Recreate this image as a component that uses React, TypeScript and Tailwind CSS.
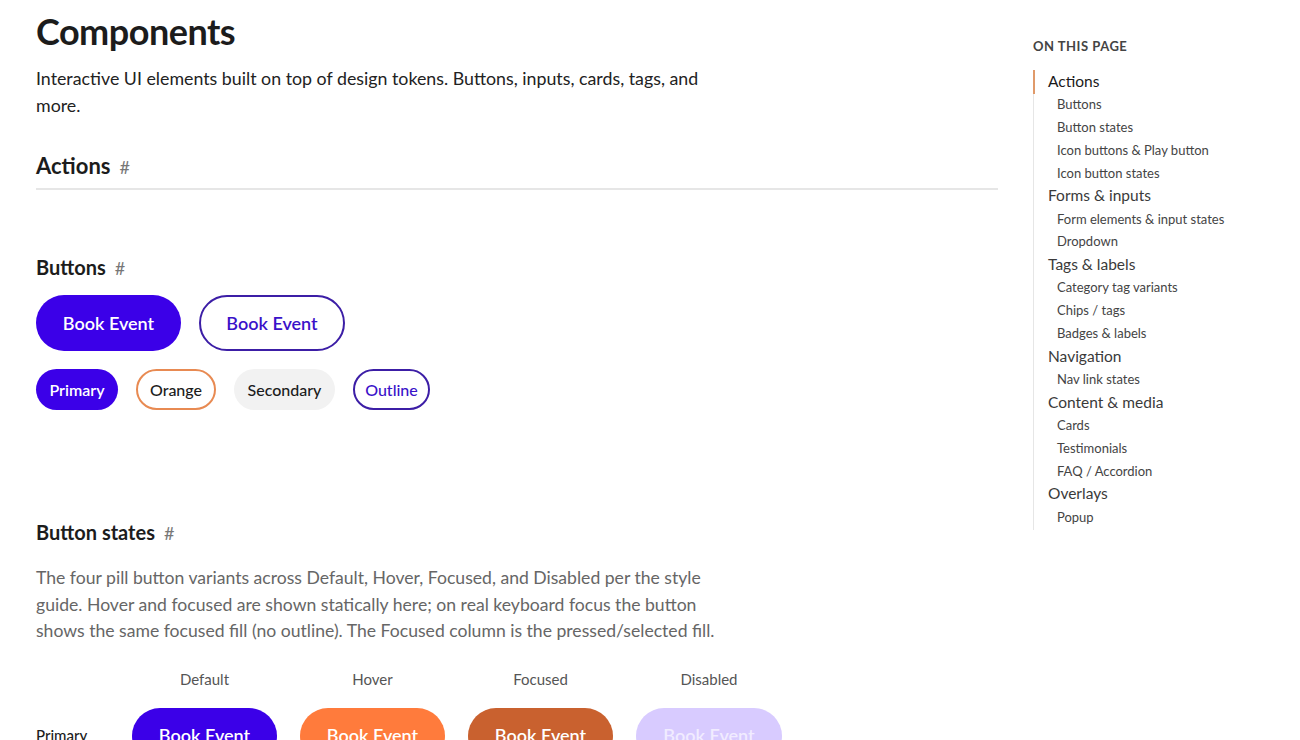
import React from "react";

const font = { fontFamily: "Lato, 'Noto Sans', sans-serif" };

function Hash() {
  return <span className="ml-[9px] text-[18px] font-normal text-[#777]">#</span>;
}

const toc: [string, boolean][] = [
  ["Actions", true],
  ["Buttons", false],
  ["Button states", false],
  ["Icon buttons & Play button", false],
  ["Icon button states", false],
  ["Forms & inputs", true],
  ["Form elements & input states", false],
  ["Dropdown", false],
  ["Tags & labels", true],
  ["Category tag variants", false],
  ["Chips / tags", false],
  ["Badges & labels", false],
  ["Navigation", true],
  ["Nav link states", false],
  ["Content & media", true],
  ["Cards", false],
  ["Testimonials", false],
  ["FAQ / Accordion", false],
  ["Overlays", true],
  ["Popup", false],
];

export default function App() {
  return (
    <div className="flex h-[740px] overflow-hidden bg-white text-[#1a1a1a]" style={font}>
      <main className="w-[998px] shrink-0 pl-[36px]">
        <h1 className="mt-[9px] text-[36px] font-bold leading-[44px] tracking-[-0.5px] text-[#1c1c1c]">Components</h1>
        <p className="mt-[12px] w-[680px] text-[17.8px] leading-[27px] text-[#222]">
          Interactive UI elements built on top of design tokens. Buttons, inputs, cards, tags, and more.
        </p>
        <div className="mt-[32px] border-b-2 border-[#e6e6e6] pb-[6px]">
          <h2 className="text-[22px] font-bold leading-[30px] text-[#1c1c1c]">
            Actions
            <Hash />
          </h2>
        </div>

        <h3 className="mt-[63px] text-[20px] font-bold leading-[28px] text-[#1c1c1c]">
          Buttons
          <Hash />
        </h3>
        <div className="mt-[13px] flex gap-[18px]">
          <button className="flex h-[56px] w-[145px] items-center justify-center rounded-full bg-[#3b00e8] text-[18px] font-semibold text-white">
            Book Event
          </button>
          <button className="flex h-[56px] w-[146px] items-center justify-center rounded-full border-2 border-[#3c1ea6] bg-white text-[18px] font-semibold text-[#3a12c9]">
            Book Event
          </button>
        </div>
        <div className="mt-[18px] flex gap-[18px]">
          <button className="flex h-[41px] w-[82px] items-center justify-center rounded-full bg-[#3b00e8] text-[16px] font-semibold text-white">
            Primary
          </button>
          <button className="flex h-[41px] w-[80px] items-center justify-center rounded-full border-2 border-[#e88a52] bg-white text-[16px] font-medium text-[#1c1c1c]">
            Orange
          </button>
          <button className="flex h-[41px] w-[101px] items-center justify-center rounded-full bg-[#f2f2f2] text-[16px] font-medium text-[#1c1c1c]">
            Secondary
          </button>
          <button className="flex h-[41px] w-[77px] items-center justify-center rounded-full border-2 border-[#3c1ea6] bg-white text-[16px] font-medium text-[#3a12c9]">
            Outline
          </button>
        </div>

        <h3 className="mt-[108px] text-[20px] font-bold leading-[28px] text-[#1c1c1c]">
          Button states
          <Hash />
        </h3>
        <p className="mt-[18px] w-[690px] text-[17.6px] leading-[26.5px] text-[#666]">
          The four pill button variants across Default, Hover, Focused, and Disabled per the style guide. Hover and focused are shown statically here; on real keyboard focus the button shows the same focused fill (no outline). The Focused column is the pressed/selected fill.
        </p>
        <div className="mt-[24px] grid grid-cols-[96px_168px_168px_168px_168px] text-[15px] leading-[20px] text-[#555]">
          <div />
          <div><span className="inline-block w-[145px] text-center">Default</span></div>
          <div><span className="inline-block w-[145px] text-center">Hover</span></div>
          <div><span className="inline-block w-[145px] text-center">Focused</span></div>
          <div><span className="inline-block w-[146px] text-center">Disabled</span></div>
        </div>
        <div className="mt-[19px] grid grid-cols-[96px_168px_168px_168px_168px] items-center">
          <div className="text-[15px] font-medium text-[#1c1c1c]">Primary</div>
          <button className="flex h-[56px] w-[145px] items-center justify-center rounded-full bg-[#3b00e8] text-[18px] font-semibold text-white">Book Event</button>
          <button className="flex h-[56px] w-[145px] items-center justify-center rounded-full bg-[#ff7b3c] text-[18px] font-semibold text-white">Book Event</button>
          <button className="flex h-[56px] w-[145px] items-center justify-center rounded-full bg-[#c9612f] text-[18px] font-semibold text-white">Book Event</button>
          <button className="flex h-[56px] w-[146px] items-center justify-center rounded-full bg-[#d8cbff] text-[18px] font-semibold text-[#f1ecff]">Book Event</button>
        </div>
      </main>

      <aside className="ml-[35px] w-[240px] shrink-0 pt-[38px]">
        <div className="text-[13px] font-bold uppercase leading-[16px] tracking-[0.5px] text-[#444]">On this page</div>
        <div className="relative mt-[16px] flex flex-col border-l border-[#e6e6e6] pb-[2px]">
          <div className="absolute left-[-1px] top-0 h-[24px] w-[2px] bg-[#e09a6a]" />
          {toc.map(([label, top], i) => (
            <div
              key={i}
              className={
                top
                  ? "pl-[14px] text-[15.5px] leading-[23.2px] " + (i === 0 ? "text-[#1a1a1a]" : "text-[#3a3a3a]")
                  : "pl-[23px] text-[13px] leading-[22.8px] text-[#444]"
              }
            >
              {label}
            </div>
          ))}
        </div>
      </aside>
    </div>
  );
}
